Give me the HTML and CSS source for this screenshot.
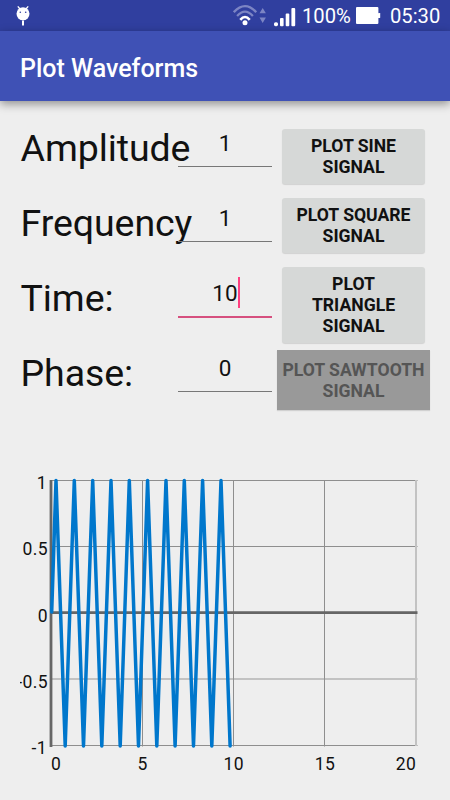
FILE: index.html
```html
<!DOCTYPE html>
<html lang="en">
  <head>
    <meta charset="UTF-8" />
    <meta name="viewport" content="width=device-width, initial-scale=1.0" />
    <title>Plot Waveforms</title>
    <link rel="stylesheet" href="styles.css">
  </head>
  <body>
    <!-- Status bar -->
    <div class="status-bar">
      <svg class="debug-icon" width="14" height="20" viewBox="0 0 14 20">
        <path d="M1.8 .4 L4 3 M12.2 .4 L10 3" stroke="#fff" stroke-width="1.3" />
        <circle cx="7" cy="7.8" r="6.5" fill="#fff" />
        <circle cx="4.3" cy="6.2" r=".8" fill="#303f9f" />
        <circle cx="9.7" cy="6.2" r=".8" fill="#303f9f" />
        <path d="M7 14.5 V19.5" stroke="#fff" stroke-width="2" />
      </svg>
      <div class="status-right">
        <svg class="wifi-icon" width="34" height="21" viewBox="0 0 34 21">
          <g fill="none" stroke-width="2.3">
            <path d="M.8 7.2 Q12 -4.8 23.2 7.2" stroke="#7c85c4" />
            <path d="M4.1 11 Q12 2.4 19.9 11" stroke="#7c85c4" />
            <path d="M7.3 14.8 Q12 9.2 16.7 14.8" stroke="#fff" stroke-width="2.6" />
          </g>
          <circle cx="12" cy="17.8" r="2.5" fill="#fff" />
          <path d="M26.5 8.2 L29.7 3 L32.9 8.2 Z M26.5 12.5 L29.7 18 L32.9 12.5 Z" fill="#7c85c4" />
        </svg>
        <svg class="signal-icon" width="22" height="19" viewBox="0 0 22 19">
          <g fill="#fff">
            <rect x="0" y="14.2" width="4" height="4" rx="1.6" />
            <rect x="6" y="10" width="3.6" height="8.2" rx="1" />
            <rect x="11.7" y="5.5" width="3.6" height="12.7" rx="1" />
            <rect x="17.4" y="0" width="3.8" height="18.2" rx="1" />
          </g>
        </svg>
        <span class="battery-level">100%</span>
        <svg class="battery-icon" width="25" height="18" viewBox="0 0 25 18">
          <rect x="0" y="0" width="22.4" height="17" rx="1" fill="#fff" />
          <rect x="22" y="6" width="2.2" height="5" rx=".6" fill="#fff" />
        </svg>
        <span class="clock">05:30</span>
      </div>
    </div>

    <header class="app-bar">
      <h1>Plot Waveforms</h1>
    </header>

    <form class="controls">
      <!-- Signal parameters -->
      <div class="fields">
        <div class="field">
          <label>Amplitude</label>
          <div class="value">1</div>
        </div>
        <div class="field">
          <label>Frequency</label>
          <div class="value">1</div>
        </div>
        <div class="field">
          <label>Time:</label>
          <div class="value focused">10<span class="cursor"></span></div>
        </div>
        <div class="field">
          <label>Phase:</label>
          <div class="value">0</div>
        </div>
      </div>

      <div class="buttons">
        <button type="button" class="btn">PLOT SINE<br>SIGNAL</button>
        <button type="button" class="btn">PLOT SQUARE<br>SIGNAL</button>
        <button type="button" class="btn tall">PLOT<br>TRIANGLE<br>SIGNAL</button>
        <button type="button" class="btn pressed">PLOT SAWTOOTH<br>SIGNAL</button>
      </div>
    </form>

    <!-- Graph, its left edge cuts long labels -->
    <svg class="graph" width="430" height="330" viewBox="20 470 430 330">
      <g class="grid">
        <path d="M51 480.5 H417.5 M51 546.5 H417.5 M51 745.5 H417.5" />
        <path class="soft" d="M51 679 H417.5" />
        <path d="M142.5 480 V746.5 M233.5 480 V746.5 M324.5 480 V746.5" />
        <path class="soft" d="M416 480 V746" />
      </g>
      <path class="axis" d="M51 480 V747 M50 612.7 H417.5" />
      <path id="wave" class="wave" />
      <g class="tick y-tick">
        <text x="47" y="488.5">1</text>
        <text x="48" y="555.3">0.5</text>
        <text x="48" y="622">0</text>
        <text x="48" y="688">-0.5</text>
        <text x="47" y="754">-1</text>
      </g>
      <g class="tick x-tick">
        <text x="56" y="770.3">0</text>
        <text x="142.5" y="770.3">5</text>
        <text x="233.7" y="770.3">10</text>
        <text x="325" y="770.3">15</text>
        <text x="406" y="770.3">20</text>
      </g>
    </svg>

    <script>
      // Triangle signal, ten cycles
      const points = ["51.7,612"];
      for (let i = 0; i < 10; i++) {
        const x = 56 + i * 18.33;
        points.push(`${x.toFixed(1)},480.5`);
        points.push(`${(x + 9.17).toFixed(1)},746`);
      }
      document.getElementById("wave").setAttribute("d", "M" + points.join(" L"));
    </script>
  </body>
</html>
```
FILE: styles.css
```css
body {
  margin: 0;
  width: 450px;
  height: 800px;
  overflow: hidden;
  display: flex;
  flex-direction: column;
  background-color: #eeeeee;
  color: #111;
  font-family: Roboto, sans-serif;
}

.status-bar {
  display: flex;
  justify-content: space-between;
  height: 31px;
  box-sizing: border-box;
  padding: 0 10px 0 16px;
  background-color: #303f9f;
  color: #fff;
}

.debug-icon {
  margin-top: 6px;
}

.status-right {
  display: flex;
  font-size: 20.2px;
  line-height: 32px;
}

.wifi-icon {
  margin-top: 5px;
}

.signal-icon {
  margin: 8px 6px 0 7px;
}

.battery-level {
  width: 47px;
  white-space: nowrap;
}

.battery-icon {
  margin: 7px 9px 0 7px;
}

.clock {
  width: 50px;
  white-space: nowrap;
}

.app-bar {
  height: 70px;
  background-color: #3f51b5;
  color: #fff;
  box-shadow: 0 3px 9px rgba(0, 0, 0, 0.4);
}

.app-bar h1 {
  margin: 0;
  padding-left: 20px;
  font-size: 25px;
  font-weight: 500;
  line-height: 75px;
}

.controls {
  display: flex;
  height: 369px;
}

.fields {
  width: 277px;
  padding-top: 10px;
}

.field {
  display: flex;
  height: 75px;
}

.field label {
  width: 178px;
  box-sizing: border-box;
  padding-left: 20.5px;
  flex-shrink: 0;
  font-size: 37.5px;
  line-height: 75px;
  letter-spacing: -0.08px;
  white-space: nowrap;
}

.value {
  width: 94px;
  height: 56px;
  box-sizing: border-box;
  border-bottom: 1px solid #777;
  font-size: 22.5px;
  line-height: 64px;
  text-align: center;
}

.value.focused {
  height: 57px;
  border-bottom: 2px solid #d6507f;
}

.cursor {
  display: inline-block;
  width: 2px;
  height: 31px;
  margin-right: -2px;
  vertical-align: -7px;
  background-color: #ff4081;
}

.buttons {
  display: flex;
  flex-direction: column;
  align-items: center;
  width: 153px;
  padding-top: 28px;
}

.btn {
  width: 143px;
  height: 55px;
  margin-bottom: 14px;
  padding: 1px 0 0;
  border: none;
  border-radius: 3px;
  background-color: #d6d8d7;
  box-shadow: 0 1px 1px rgba(0, 0, 0, 0.12);
  color: #111;
  font-family: inherit;
  font-size: 17.6px;
  font-weight: 700;
  line-height: 20.7px;
  white-space: nowrap;
  flex-shrink: 0;
}

.btn.tall {
  height: 76px;
  margin-bottom: 7px;
}

.btn.pressed {
  width: 153px;
  height: 60px;
  margin: 0;
  border-radius: 0;
  background-color: #999;
  color: #555;
}

.graph {
  display: block;
  flex-shrink: 0;
  margin-left: 20px;
}

.grid path {
  fill: none;
  stroke: #8e8e8e;
  stroke-width: 1;
}

.grid .soft {
  stroke: #c2c2c2;
  stroke-width: 2;
}

.axis {
  fill: none;
  stroke: #666;
  stroke-width: 2.8;
}

.wave {
  fill: none;
  stroke: #0077cc;
  stroke-width: 3.5;
  stroke-linejoin: round;
  stroke-linecap: round;
}

.tick {
  font-size: 17.5px;
  letter-spacing: 0.4px;
  fill: #111;
}

.y-tick {
  text-anchor: end;
}

.x-tick {
  text-anchor: middle;
}
```
